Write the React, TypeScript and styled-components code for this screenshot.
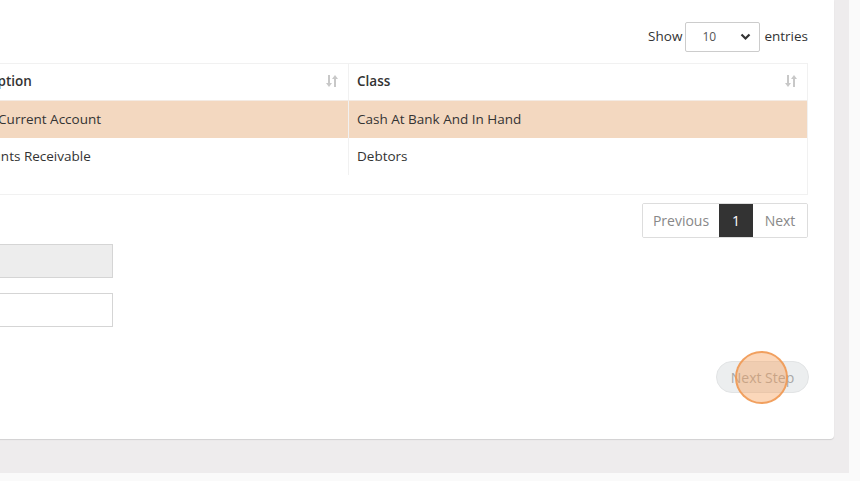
import React from "react";
import styled, { createGlobalStyle } from "styled-components";

const Global = createGlobalStyle`
  html, body { margin: 0; padding: 0; background: #fafafa; overflow: hidden; }
  body { font-family: "Open Sans", "Noto Sans", sans-serif; color: #333; }
  * { box-sizing: border-box; }
`;

const Page = styled.div`
  width: 860px;
  height: 481px;
  display: flex;
  flex-direction: column;
`;

const Backdrop = styled.div`
  width: 849px;
  height: 473px;
  background: #eeeced;
  overflow: hidden;
`;

const Card = styled.div`
  margin-left: -400px;
  width: 1234px;
  height: 439px;
  background: #fff;
  border-radius: 0 0 4px 0;
  box-shadow: 0 1px 1px rgba(0, 0, 0, 0.12);
  padding: 22px 26px 0 40px;
  display: flex;
  flex-direction: column;
`;

const Toolbar = styled.div`
  display: flex;
  justify-content: flex-end;
  align-items: center;
  gap: 3px;
  height: 29px;
  font-size: 13.5px;
  color: #333;
`;

const ToolText = styled.span`
  margin-top: -2px;
`;

const SelectBox = styled.div`
  width: 75px;
  height: 30px;
  border: 1px solid #ccc;
  border-radius: 2px;
  display: flex;
  align-items: center;
  justify-content: space-between;
  padding: 0 8px 0 16px;
  font-size: 12px;
  color: #555;
  margin-right: 1px;
`;

const TableWrap = styled.div`
  margin-top: 12px;
  border: 1px solid #f1f1f1;
  padding-bottom: 19px;
`;

const Row = styled.div<{ $head?: boolean; $hl?: boolean }>`
  display: grid;
  grid-template-columns: 708px 1fr;
  height: 37px;
  background: ${(p) => (p.$hl ? "#f3d8c0" : "#fff")};
  font-size: 13.5px;
  font-weight: ${(p) => (p.$head ? 600 : 400)};
  color: #333;
  border-bottom: ${(p) => (p.$head ? "1px solid #f3ebe4" : "none")};
`;

const Cell = styled.div<{ $last?: boolean }>`
  display: flex;
  align-items: center;
  justify-content: space-between;
  padding: 0 10px 2px 8px;
  border-right: ${(p) => (p.$last ? "none" : "1px solid #f1f1f1")};
`;

const Lead = styled.span<{ $indent: number }>`
  margin-left: ${(p) => p.$indent}px;
  white-space: nowrap;
`;

const Pager = styled.div`
  margin-top: 8px;
  align-self: flex-end;
  display: flex;
  height: 35px;
  border: 1px solid #ddd;
  border-radius: 2px;
  overflow: hidden;
  font-size: 14px;
`;

const PageBtn = styled.div<{ $active?: boolean; $w: number }>`
  width: ${(p) => p.$w}px;
  display: flex;
  align-items: center;
  justify-content: center;
  padding-bottom: 1px;
  background: ${(p) => (p.$active ? "#333" : "#fff")};
  color: ${(p) => (p.$active ? "#fff" : "#888")};
`;

const Form = styled.div`
  margin-top: 6px;
  display: flex;
  flex-direction: column;
  gap: 15px;
  width: 473px;
`;

const Input = styled.div<{ $disabled?: boolean }>`
  height: 34px;
  border: 1px solid #d5d5d5;
  background: ${(p) => (p.$disabled ? "#ededed" : "#fff")};
`;

const Actions = styled.div`
  margin-top: 34px;
  display: flex;
  justify-content: flex-end;
  margin-right: -1px;
`;

const StepBtn = styled.div`
  position: relative;
  width: 93px;
  height: 32px;
  border-radius: 16px;
  background: #eceeef;
  border: 1px solid #e2e4e5;
  color: #a8a8a8;
  font-size: 14px;
  display: flex;
  align-items: center;
  justify-content: center;
`;

const Ripple = styled.div`
  position: absolute;
  left: 18px;
  top: -11px;
  width: 53px;
  height: 53px;
  border-radius: 50%;
  background: rgba(245, 160, 90, 0.42);
  border: 2px solid rgba(240, 150, 80, 0.85);
`;

const SortIcon = () => (
  <svg width="12" height="14" viewBox="0 0 12 14">
    <g fill="#c8c8c8">
      <rect x="2" y="1" width="2" height="10" />
      <polygon points="0,9 6,9 3,13" />
      <rect x="8" y="3" width="2" height="10" />
      <polygon points="6,5 12,5 9,1" />
    </g>
  </svg>
);

const Chevron = () => (
  <svg width="11" height="8" viewBox="0 0 11 8">
    <polyline points="1.5,1.5 5.5,5.5 9.5,1.5" fill="none" stroke="#333" strokeWidth="2.2" />
  </svg>
);

export default function App() {
  return (
    <Page>
      <Global />
      <Backdrop>
        <Card>
          <Toolbar>
            <ToolText>Show</ToolText>
            <SelectBox>
              <span>10</span>
              <Chevron />
            </SelectBox>
            <ToolText>entries</ToolText>
          </Toolbar>
          <TableWrap>
            <Row $head>
              <Cell>
                <Lead $indent={308}>Description</Lead>
                <SortIcon />
              </Cell>
              <Cell $last>
                <span>Class</span>
                <SortIcon />
              </Cell>
            </Row>
            <Row $hl>
              <Cell>
                <Lead $indent={314}>Bank Current Account</Lead>
              </Cell>
              <Cell $last>
                <span>Cash At Bank And In Hand</span>
              </Cell>
            </Row>
            <Row>
              <Cell>
                <Lead $indent={314}>Accounts Receivable</Lead>
              </Cell>
              <Cell $last>
                <span>Debtors</span>
              </Cell>
            </Row>
          </TableWrap>
          <Pager>
            <PageBtn $w={76}>Previous</PageBtn>
            <PageBtn $w={34} $active>1</PageBtn>
            <PageBtn $w={54}>Next</PageBtn>
          </Pager>
          <Form>
            <Input $disabled />
            <Input />
          </Form>
          <Actions>
            <StepBtn>
              Next Step
              <Ripple />
            </StepBtn>
          </Actions>
        </Card>
      </Backdrop>
    </Page>
  );
}
